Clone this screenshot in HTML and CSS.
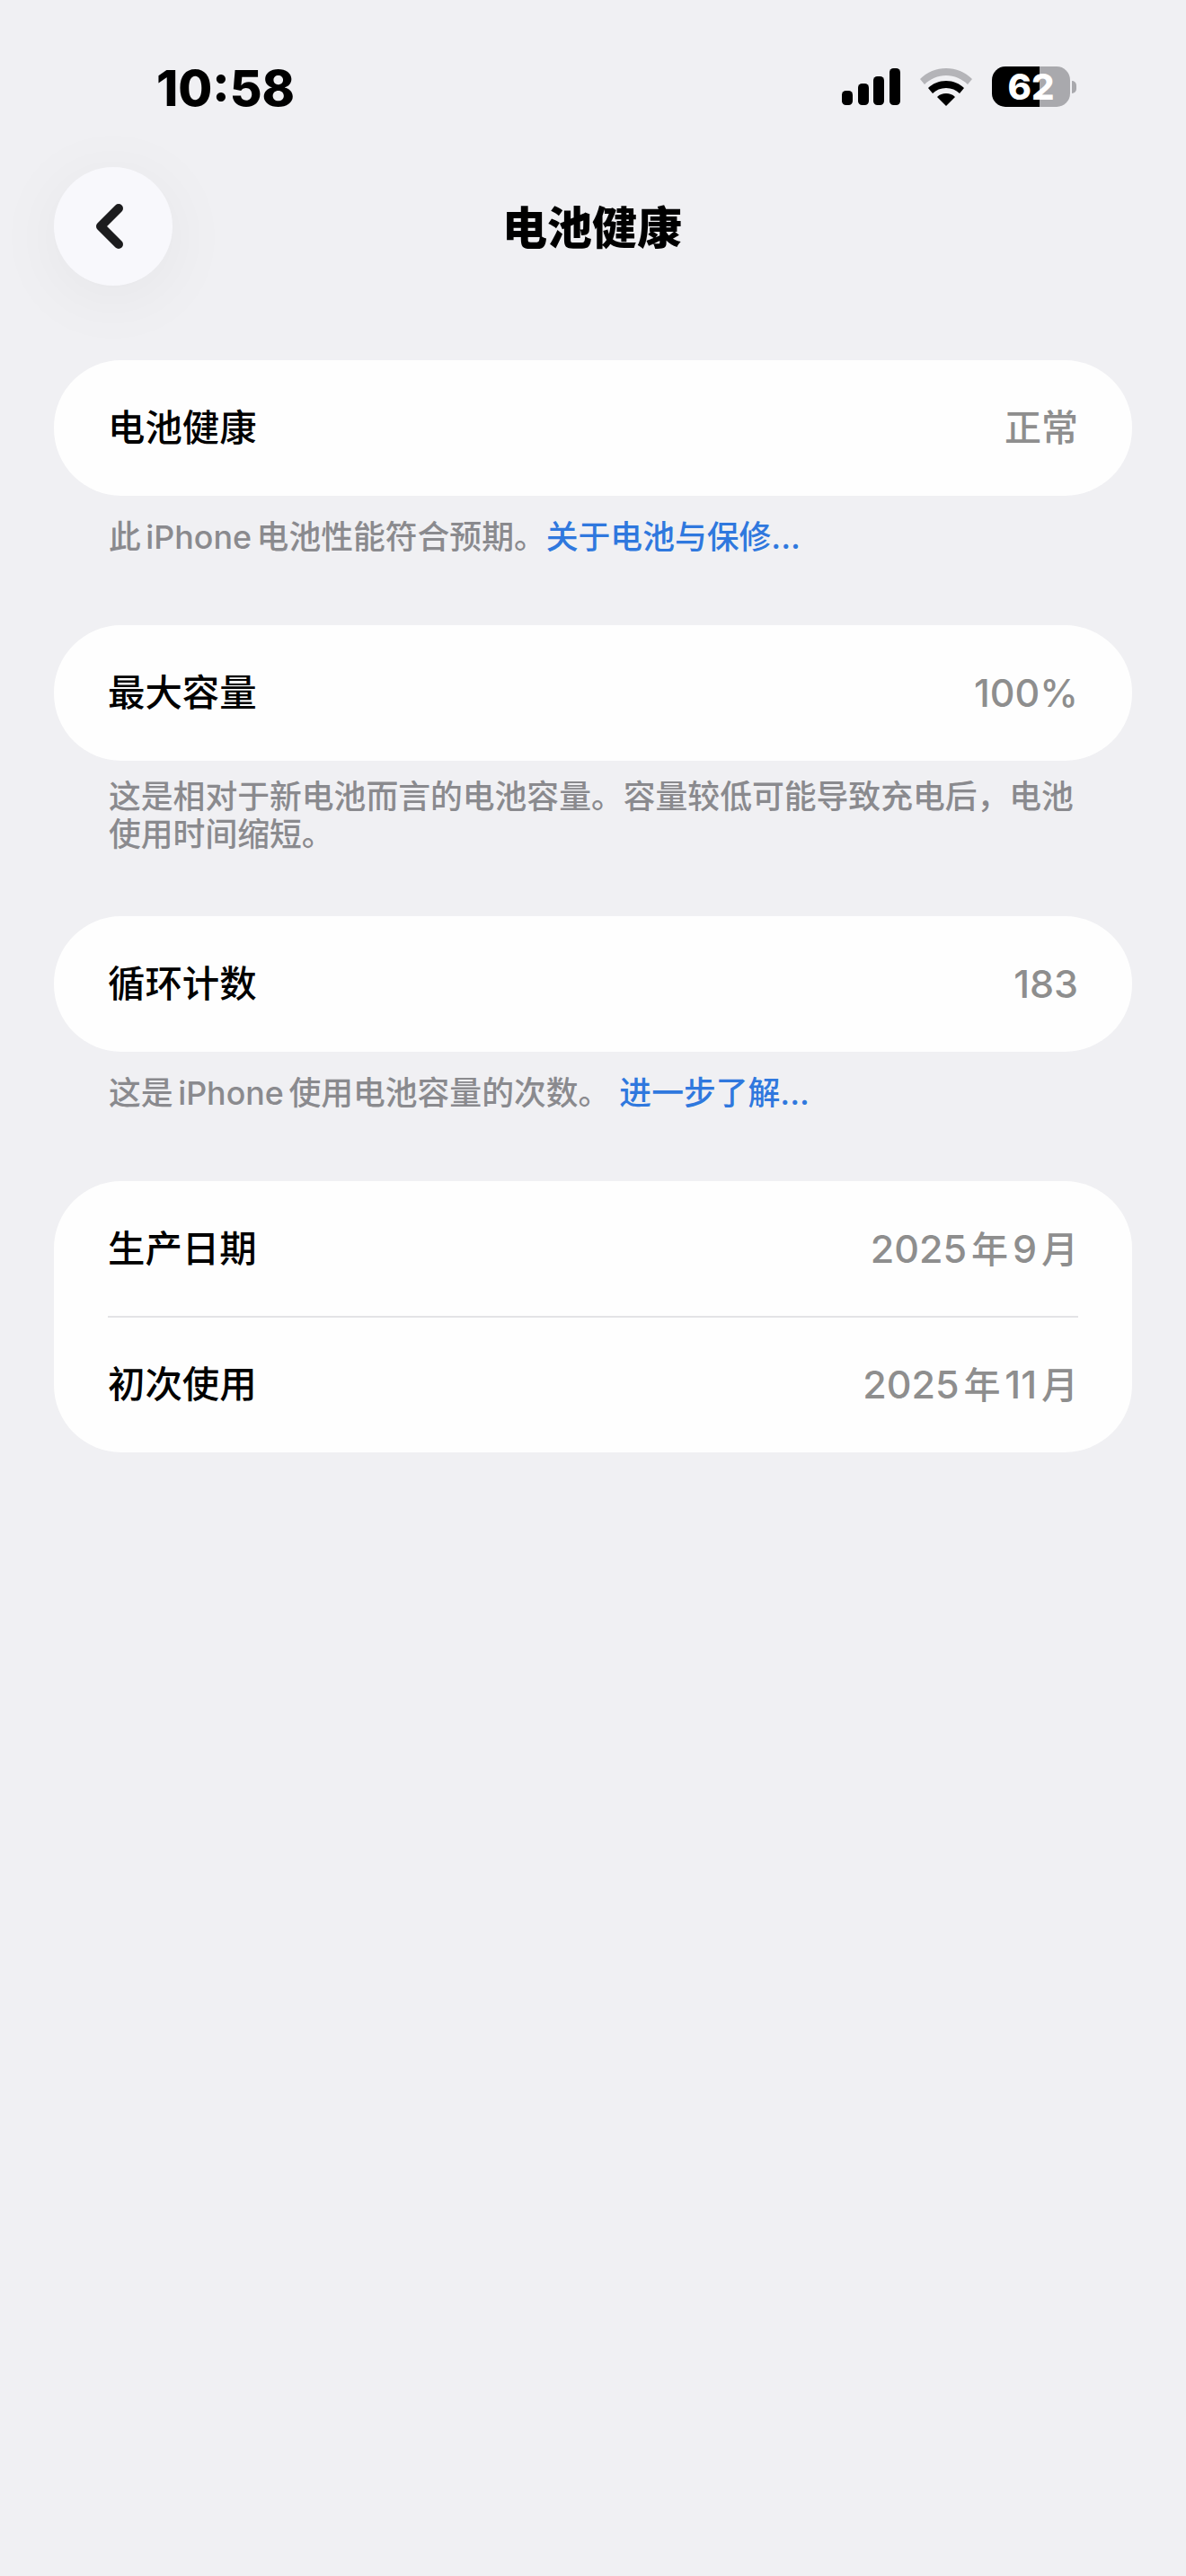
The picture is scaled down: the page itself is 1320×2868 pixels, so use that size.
FILE: index.html
```html
<!DOCTYPE html>
<html lang="zh-CN">
<head>
<meta charset="utf-8">
<title>电池健康</title>
<link rel="stylesheet" href="styles.css">
</head>
<body>
<div class="screen">
  <header class="status-bar">
    <span class="clock">10:58</span>
    <div class="status-icons">
      <svg class="signal" width="65" height="41" viewBox="0 0 65 41">
        <rect x="0" y="25" width="12" height="16" rx="4.5"/>
        <rect x="18" y="17" width="12" height="24" rx="4.5"/>
        <rect x="35" y="9" width="12" height="32" rx="4.5"/>
        <rect x="53" y="0" width="12" height="41" rx="4.5"/>
      </svg>
      <svg class="wifi" width="58" height="42" viewBox="0 0 58 42">
        <path class="wifi-off" d="M29 0C18 0 8 4 0 12l5 6c6-6 15-10 24-10s18 4 24 10l5-6C50 4 40 0 29 0z"/>
        <path d="M29 14c-8 0-15 3-20 8l5 6c4-4 9-6 15-6s11 2 15 6l5-6c-5-5-12-8-20-8z"/>
        <path d="M29 28c-4 0-7 1-10 4l10 10 10-10c-3-3-6-4-10-4z"/>
      </svg>
      <div class="battery">
        <div class="battery-body">
          <span class="battery-level">62</span>
        </div>
        <div class="battery-cap"></div>
      </div>
    </div>
  </header>

  <nav class="nav-bar">
    <button class="back" type="button" aria-label="返回">
      <svg width="32" height="50" viewBox="0 0 32 50">
        <path d="M27 5 7 25l20 20" fill="none" stroke="#1c1c1e" stroke-width="10" stroke-linecap="round" stroke-linejoin="round"/>
      </svg>
    </button>
    <h1 class="nav-title">电池健康</h1>
  </nav>

  <main class="content">
    <section class="group">
      <div class="card">
        <div class="row"><span class="label">电池健康</span><span class="value">正常</span></div>
      </div>
      <p class="note note-single">此 iPhone 电池性能符合预期。<a class="link">关于电池与保修...</a></p>
    </section>

    <section class="group">
      <div class="card">
        <div class="row"><span class="label">最大容量</span><span class="value"><span class="num">100%</span></span></div>
      </div>
      <p class="note">这是相对于新电池而言的电池容量。容量较低可能导致充电后，电池使用时间缩短。</p>
    </section>

    <section class="group">
      <div class="card">
        <div class="row"><span class="label">循环计数</span><span class="value"><span class="num">183</span></span></div>
      </div>
      <p class="note note-single">这是 iPhone 使用电池容量的次数。<a class="link link-spaced">进一步了解...</a></p>
    </section>

    <section class="group">
      <div class="card">
        <div class="row"><span class="label">生产日期</span><span class="value"><span class="num">2025</span> 年 <span class="num">9</span> 月</span></div>
        <div class="divider"></div>
        <div class="row"><span class="label">初次使用</span><span class="value"><span class="num">2025</span> 年 <span class="num">11</span> 月</span></div>
      </div>
    </section>
  </main>
</div>
</body>
</html>
```

FILE: styles.css
```css
* {
  box-sizing: border-box;
}

html,
body {
  margin: 0;
  padding: 0;
}

body {
  background: #f0f0f3;
  font-family: Inter, "Noto Sans CJK SC", sans-serif;
  color: #000;
}

.screen {
  height: 2868px;
  overflow: hidden;
}

/* Status bar */
.status-bar {
  height: 186px;
  padding: 73px 122px 0 174px;
  display: flex;
  justify-content: space-between;
  align-items: flex-start;
}

.clock {
  font-size: 55px;
  line-height: 50px;
  font-weight: 800;
}

.status-icons {
  display: flex;
  align-items: center;
  gap: 22px;
  margin-top: 1px;
}

.signal {
  display: block;
  fill: #000;
}

.wifi {
  display: block;
  fill: #000;
}

.wifi-off {
  fill: #b4b4b8;
}

.battery {
  display: flex;
  align-items: center;
  gap: 2px;
}

/* Charge level shown as a hard colour stop across the battery body */
.battery-body {
  width: 87px;
  height: 45px;
  border-radius: 15px;
  background: linear-gradient(to right, #000 53px, #a9a9ad 53px);
  text-align: center;
}

.battery-level {
  font-size: 40px;
  line-height: 45px;
  font-weight: 800;
  color: #fff;
}

.battery-cap {
  width: 5px;
  height: 14px;
  border-radius: 0 5px 5px 0;
  background: #a9a9ad;
}

/* Navigation */
.nav-bar {
  position: relative;
  height: 132px;
  margin: 0 60px;
  display: flex;
  align-items: center;
  justify-content: center;
}

.back {
  position: absolute;
  left: 0;
  top: 0;
  width: 132px;
  height: 132px;
  padding: 0;
  border: 0;
  border-radius: 50%;
  background: #f8f8fc;
  box-shadow: 0 12px 80px rgba(0, 0, 0, 0.05);
  display: flex;
  align-items: center;
  justify-content: center;
}

.back svg {
  display: block;
  margin-right: 10px;
}

.nav-title {
  margin: 3px 0 0 -2px;
  font-size: 50px;
  line-height: 60px;
  font-weight: 900;
}

/* Settings list */
.content {
  padding: 83px 60px 0;
  display: flex;
  flex-direction: column;
  gap: 70px;
}

.card {
  background: #fefefe;
  border-radius: 75px;
  padding: 0 60px;
}

.row {
  height: 151px;
  padding-bottom: 1px;
  display: flex;
  align-items: center;
  justify-content: space-between;
}

.label {
  font-size: 41.4px;
  line-height: 50px;
  font-weight: 500;
}

.value {
  font-size: 41px;
  line-height: 50px;
  font-weight: 500;
  color: #8e8e8e;
  word-spacing: -6px;
}

.num {
  font-size: 43px;
}

.divider {
  height: 2px;
  margin: -1px 0;
  background: #e3e3e6;
}

.note {
  margin: 19px 0 0;
  padding: 0 55px 0 61px;
  font-size: 35.8px;
  line-height: 42px;
  font-weight: 500;
  color: #8a8a8e;
  word-spacing: -4px;
}

.note-single {
  line-height: 55px;
}

.link {
  color: #2f78de;
}

.link-spaced {
  margin-left: 10px;
}
```
